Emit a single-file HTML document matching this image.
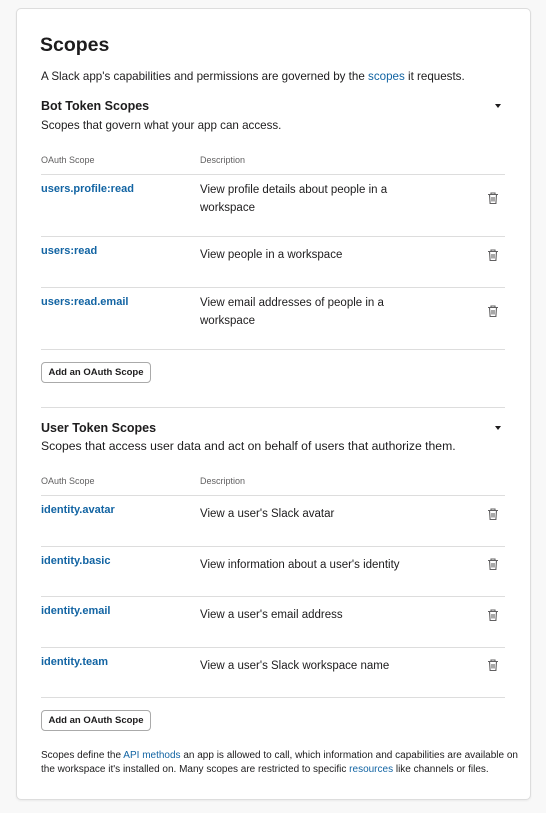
<!DOCTYPE html>
<html><head><style>
*{margin:0;padding:0;box-sizing:border-box}
body{width:546px;height:813px;background:#f8f8f8;font-family:"Liberation Sans",sans-serif;color:#1d1c1d;position:relative;overflow:hidden}
.card{position:absolute;left:16px;top:8px;width:515px;height:792px;background:#fff;border:1px solid #ddd;border-radius:5px;box-shadow:0 1px 2px rgba(0,0,0,.06)}
.a{position:absolute;white-space:nowrap}
.t{font-size:11.5px;line-height:18px}
.h{font-size:9px;color:#616061}
.l{color:#1264a3}
.s{font-size:11px;font-weight:bold;color:#1264a3}
.hr{position:absolute;left:41px;width:464px;height:1px;background:#ddd}
.btn{position:absolute;left:41px;width:110px;height:21px;border:1px solid #aaa;border-radius:4px;font-size:9.5px;font-weight:bold;text-align:center;line-height:19px}
.tri{position:absolute;left:495px;width:0;height:0;border-left:3.5px solid transparent;border-right:3.5px solid transparent;border-top:4px solid #1d1c1d}
.tr{position:absolute;left:486px}
</style></head><body>
<div class="card"></div>
<div class="a" style="left:40px;top:34px;font-size:19.5px;font-weight:bold">Scopes</div>
<div class="a t" style="left:41px;top:68px;font-size:11.6px">A Slack app's capabilities and permissions are governed by the <span class="l">scopes</span> it requests.</div>
<div class="a" style="left:41px;top:99px;font-size:12.5px;font-weight:bold">Bot Token Scopes</div>
<div class="tri" style="top:104px"></div>
<div class="a t" style="left:41px;top:117px;font-size:11.6px">Scopes that govern what your app can access.</div>
<div class="a h" style="left:41px;top:155px">OAuth Scope</div><div class="a h" style="left:200px;top:155px">Description</div>
<div class="hr" style="top:174px"></div>
<div class="a s" style="left:41px;top:183px">users.profile:read</div>
<div class="a t" style="left:200px;top:181px">View profile details about people in a<br>workspace</div>
<div class="hr" style="top:236px"></div>
<div class="a s" style="left:41px;top:245px">users:read</div>
<div class="a t" style="left:200px;top:246px">View people in a workspace</div>
<div class="hr" style="top:287px"></div>
<div class="a s" style="left:41px;top:296px">users:read.email</div>
<div class="a t" style="left:200px;top:294px">View email addresses of people in a<br>workspace</div>
<div class="hr" style="top:349px"></div>
<div class="btn" style="top:362px">Add an OAuth Scope</div>
<div class="hr" style="top:407px"></div>
<div class="a" style="left:41px;top:421px;font-size:12.5px;font-weight:bold">User Token Scopes</div>
<div class="tri" style="top:426px"></div>
<div class="a t" style="left:41px;top:437px;font-size:12.2px">Scopes that access user data and act on behalf of users that authorize them.</div>
<div class="a h" style="left:41px;top:476px">OAuth Scope</div><div class="a h" style="left:200px;top:476px">Description</div>
<div class="hr" style="top:495px"></div>
<div class="a s" style="left:41px;top:504px">identity.avatar</div>
<div class="a t" style="left:200px;top:505px">View a user's Slack avatar</div>
<div class="hr" style="top:546px"></div>
<div class="a s" style="left:41px;top:555px">identity.basic</div>
<div class="a t" style="left:200px;top:556px">View information about a user's identity</div>
<div class="hr" style="top:596px"></div>
<div class="a s" style="left:41px;top:605px">identity.email</div>
<div class="a t" style="left:200px;top:606px">View a user's email address</div>
<div class="hr" style="top:647px"></div>
<div class="a s" style="left:41px;top:656px">identity.team</div>
<div class="a t" style="left:200px;top:657px">View a user's Slack workspace name</div>
<div class="hr" style="top:697px"></div>
<div class="btn" style="top:710px">Add an OAuth Scope</div>
<div class="a" style="left:41px;top:749px;font-size:10px;line-height:14px">Scopes define the <span class="l">API methods</span> an app is allowed to call, which information and capabilities are available on<br>the workspace it's installed on. Many scopes are restricted to specific <span class="l">resources</span> like channels or files.</div>
<svg width="0" height="0" style="position:absolute"><defs><g id="tr"><path d="M2 3.5h10M5 3.5V2h4v1.5M3.5 3.5l.6 9h5.8l.6-9M6 6v4.5M8 6v4.5" fill="none" stroke="#616061" stroke-width="1.1"/></g></defs></svg>
<svg class="tr" style="top:191px" width="14" height="14"><use href="#tr"/></svg>
<svg class="tr" style="top:248px" width="14" height="14"><use href="#tr"/></svg>
<svg class="tr" style="top:304px" width="14" height="14"><use href="#tr"/></svg>
<svg class="tr" style="top:507px" width="14" height="14"><use href="#tr"/></svg>
<svg class="tr" style="top:557px" width="14" height="14"><use href="#tr"/></svg>
<svg class="tr" style="top:608px" width="14" height="14"><use href="#tr"/></svg>
<svg class="tr" style="top:658px" width="14" height="14"><use href="#tr"/></svg>
</body></html>
